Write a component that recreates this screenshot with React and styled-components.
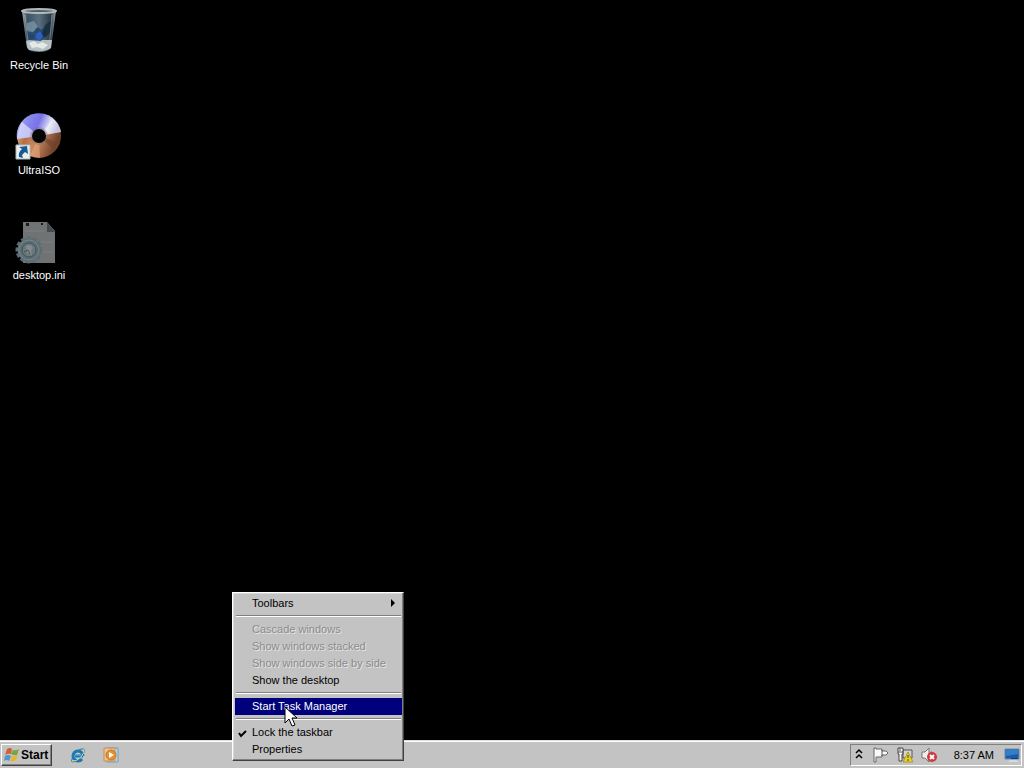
import React from "react";
import styled, { createGlobalStyle, css } from "styled-components";

const GlobalStyle = createGlobalStyle`
  * { box-sizing: border-box; }
  body {
    margin: 0;
    background: #000;
    font-family: "Liberation Sans", Arial, sans-serif;
    font-size: 11px;
    line-height: 17px;
    cursor: default;
  }
  button { font: inherit; color: inherit; }
`;

const raised = css`
  border: 1px solid;
  border-color: #fff #404040 #404040 #fff;
  box-shadow: inset -1px -1px 0 #808080;
`;

const Screen = styled.div`
  position: relative;
  display: flex;
  flex-direction: column;
  min-height: 100vh;
  overflow: hidden;
`;

const Desktop = styled.main`
  flex: 1;
  display: flex;
  flex-direction: column;
  align-items: flex-start;
  gap: 32px;
  padding: 7px 0 0 1px;
`;

const Shortcut = styled.button`
  display: flex;
  flex-direction: column;
  align-items: center;
  gap: 2px;
  width: 76px;
  height: 73px;
  padding: 0;
  border: 0;
  background: none;
  color: #fff;
  svg { display: block; width: 48px; height: 48px; }
`;

const Taskbar = styled.footer`
  display: flex;
  align-items: center;
  justify-content: space-between;
  height: 28px;
  padding: 1px 2px 0 1px;
  background: #c3c3c3;
  border-top: 1px solid #dedede;
  box-shadow: inset 0 1px 0 #fff;
`;

const TaskGroup = styled.div`
  display: flex;
  align-items: center;
`;

const StartButton = styled.button`
  ${raised}
  display: flex;
  align-items: center;
  gap: 1px;
  width: 51px;
  height: 22px;
  margin-right: 18px;
  padding: 0 2px;
  background: #c3c3c3;
  color: #000;
  font-weight: bold;
  font-size: 12px;
`;

const IconButton = styled.button`
  display: block;
  width: 16px;
  height: 16px;
  margin-right: ${(p) => p.$gap || 8}px;
  padding: 0;
  border: 0;
  background: none;
  svg { display: block; }
`;

const Tray = styled.div`
  display: flex;
  align-items: center;
  height: 22px;
  border: 1px solid;
  border-color: #808080 #fff #fff #808080;
`;

const Clock = styled.time`
  margin: 0 10px 0 9px;
  white-space: nowrap;
`;

const Menu = styled.div`
  ${raised}
  position: absolute;
  left: 232px;
  bottom: 7px;
  width: 172px;
  padding: 2px 1px 2px 2px;
  background: #c3c3c3;
  box-shadow: inset -1px -1px 0 #808080, inset 1px 1px 0 #d8d8d8;
`;

const Item = styled.button`
  display: grid;
  grid-template-columns: 17px 1fr 12px;
  align-items: center;
  width: 100%;
  height: 17px;
  padding: 0;
  border: 0;
  text-align: left;
  white-space: nowrap;
  background: ${(p) => (p.$active ? "#00007c" : "transparent")};
  color: ${(p) => (p.$active ? "#fff" : "#000")};
  &:disabled { color: #8b8b8b; text-shadow: 1px 1px 0 #e4e4e4; }
  svg { display: block; }
`;

const Separator = styled.hr`
  height: 2px;
  margin: 3px 1px 4px;
  border: 0;
  border-top: 1px solid #808080;
  border-bottom: 1px solid #fff;
`;

const Pointer = styled.svg`
  position: absolute;
  left: 284px;
  bottom: 40px;
  pointer-events: none;
`;

function BinIcon() {
  return (
    <svg viewBox="0 0 48 48" aria-hidden="true">
      <defs>
        <linearGradient id="glass" x1="0" x2="1">
          <stop offset="0" stopColor="#a3b2b9" />
          <stop offset=".15" stopColor="#3d5260" />
          <stop offset=".5" stopColor="#5a7080" />
          <stop offset=".84" stopColor="#2a3b46" />
          <stop offset="1" stopColor="#98a4aa" />
        </linearGradient>
      </defs>
      <path d="M7 4 12 41Q14 45 24 45Q34 45 36 41L41 4Z" fill="url(#glass)" />
      <path d="M11 34Q18 31 25 33L37 33L36 41Q30 46 14 43L12 40Z" fill="#b4bfc2" />
      <path d="m14 36 5-2 4 3 4-2 6 3-5 4-6-2-5 1Z" fill="#e4e8e6" />
      <path d="m12 16 7-2 4 6-3 2 1 6-7-1-2-5Z" fill="#7a97aa" opacity=".75" />
      <path d="m11 24 7 1 5-5 3 3 4-3 2 7-6 7-13-1Z" fill="#1d3f66" opacity=".8" />
      <path d="m21 27 4-3 3 5-3 5-5-3Z" fill="#2c5fc0" />
      <path d="m30 18 7-5-2 12-5 6-3-4Z" fill="#142a39" opacity=".8" />
      <path d="m10 8 4 34M37 8l-3 34" fill="none" stroke="#c3cccf" opacity=".45" />
      <ellipse cx="24" cy="4" rx="17" ry="2" fill="#53636c" stroke="#b0b8bb" strokeWidth="2" />
    </svg>
  );
}

function DiscIcon() {
  return (
    <svg viewBox="0 0 48 48" aria-hidden="true">
      <defs>
        <linearGradient id="blueDisc" x1="0" x2="1" y2=".25">
          <stop stopColor="#b8b9e7" /><stop offset=".3" stopColor="#8989ed" />
          <stop offset=".55" stopColor="#7773e7" /><stop offset=".8" stopColor="#e0e1f4" />
          <stop offset="1" stopColor="#9392c4" />
        </linearGradient>
        <linearGradient id="copper" x1="0" x2="1" y1="0" y2=".4">
          <stop stopColor="#f3d7bd" /><stop offset=".35" stopColor="#b66f45" />
          <stop offset=".6" stopColor="#cf8b60" /><stop offset="1" stopColor="#70412b" />
        </linearGradient>
      </defs>
      <circle cx="24" cy="24" r="22" fill="url(#copper)" />
      <path d="M2 27A22 22 0 1 1 46 20L24 24Z" fill="url(#blueDisc)" />
      <path d="M24 24 7 10Q3 16 2 27Z" fill="#fff" opacity=".55" />
      <path d="m24 24 14-17q6 4 8 13Z" fill="#fff" opacity=".45" />
      <path d="m24 24 21 7-5 8Z" fill="#70432d" opacity=".65" />
      <path d="m24 24-9 20 10 2Z" fill="#e7aa82" opacity=".55" />
      <circle cx="24" cy="24" r="9" fill="#806e70" opacity=".4" />
      <circle cx="24" cy="24" r="7" fill="#050505" />
      <path d="M1 33h14v14H1Z" fill="#e8eef1" stroke="#aebbc0" />
      <path d="m4 35 8-1 1 8-3-2-3 3 1 3-4-1q-1-5 3-8Z" fill="#195a91" />
    </svg>
  );
}

function ConfigIcon() {
  return (
    <svg viewBox="0 0 48 48" aria-hidden="true">
      <path d="M8 5h24l8 9v32H8Z" fill="#707273" />
      <path d="M32 5v10h8Z" fill="#464c4e" />
      <path d="M10 14h20M10 25h28M10 35h28" stroke="#7d8182" />
      <path d="M11 6h3v3h-3Zm15 0h2v2h-2Z" fill="#151b1c" />
      <circle cx="14" cy="33" r="9" fill="none" stroke="#5c6d73" strokeWidth="5" />
      <circle cx="14" cy="33" r="12" fill="none" stroke="#5c6d73" strokeWidth="3" strokeDasharray="4 2" />
      <circle cx="14" cy="33" r="10" fill="none" stroke="#75868c" />
      <circle cx="14" cy="33" r="7" fill="#69767a" stroke="#43545a" />
      <path d="M11 29q5-3 7 2l-2 3 1 4-5-2Z" fill="#7f8c90" />
      <path d="m9 35 4-2 2 4" fill="none" stroke="#435359" />
    </svg>
  );
}

function WindowsIcon() {
  return (
    <svg width="16" height="16" viewBox="0 0 16 16" aria-hidden="true">
      <path d="M3 2q3-2 5 0L7 7Q4 6 1 8Z" fill="#ce6138" />
      <path d="M9 3q3 1 6-1l-2 6q-3 1-6-1Z" fill="#79a63c" />
      <path d="M1 9q3-2 6 0l-2 5q-3-2-5 0Z" fill="#5195ca" />
      <path d="M8 9q3 1 6-1l-2 5q-3 2-6 1Z" fill="#e6b52f" />
    </svg>
  );
}

function ExplorerIcon() {
  return (
    <svg width="16" height="16" viewBox="0 0 16 16" aria-hidden="true">
      <path d="M13 9H5M13 9A5 5 0 1 0 12 12" fill="none" stroke="#1878b8" strokeWidth="3" />
      <path d="M5 8h6" stroke="#66b8e0" />
      <path d="M3 10Q0 15 3 15 7 15 12 9 16 3 14 2 12 1 7 4" fill="none" stroke="#277fae" />
      <path d="M2 14Q6 15 11 10 15 5 14 2" fill="none" stroke="#e2d488" />
    </svg>
  );
}

function MediaIcon() {
  return (
    <svg width="16" height="16" viewBox="0 0 16 16" aria-hidden="true">
      <path d="M4 1h11v14H4Z" fill="#b9d5e8" stroke="#739dbd" />
      <path d="M1 1h11v13H1Z" fill="#e9c59c" stroke="#cf8b52" />
      <circle cx="8" cy="8" r="5" fill="#e3922e" stroke="#c7792a" />
      <path d="m6 5 5 3-5 3Z" fill="#fff" />
    </svg>
  );
}

function FlagIcon() {
  return (
    <svg width="16" height="16" viewBox="0 0 16 16" aria-hidden="true">
      <path d="M1 1v14h2V10h6V8h4l2-2-2-2H9V2H3V1Z" fill="#f9f9f9" stroke="#666" />
      <path d="M9 3v6" stroke="#555" />
    </svg>
  );
}

function NetworkIcon() {
  return (
    <svg width="16" height="16" viewBox="0 0 16 16" aria-hidden="true">
      <path d="M6 3h9v8H6Z" fill="#d4d4d2" stroke="#555" />
      <path d="M1 1h5v6H5v7H2V7H1Z" fill="#f7f7f7" stroke="#444" />
      <path d="M3 1v3M1 5h5" stroke="#555" />
      <path d="M11 5 6 15h10Z" fill="#ecd02e" stroke="#a89a28" />
      <path d="M11 8v3M11 12v2" stroke="#4b461a" />
    </svg>
  );
}

function VolumeIcon() {
  return (
    <svg width="16" height="16" viewBox="0 0 16 16" aria-hidden="true">
      <path d="M1 5h3l4-4v14l-4-4H1Z" fill="#eee" stroke="#777" />
      <path d="M10 4q2 3 0 7" fill="none" stroke="#888" />
      <circle cx="11" cy="10" r="5" fill="#cf383d" />
      <path d="m9 8 4 4m0-4-4 4" stroke="#fff" strokeWidth="2" />
    </svg>
  );
}

function MonitorIcon() {
  return (
    <svg width="16" height="16" viewBox="0 0 16 16" aria-hidden="true">
      <path d="M1 2h14v10H1Z" fill="#2059a8" stroke="#668fb2" />
      <path d="M2 3h12v4L2 9Z" fill="#3080c8" />
      <path d="M7 11h7v1H7Z" fill="#173e72" />
      <path d="M6 13h6l3 2H4Z" fill="#d5dadb" />
    </svg>
  );
}

const shortcuts = [
  ["Recycle Bin", BinIcon],
  ["UltraISO", DiscIcon],
  ["desktop.ini", ConfigIcon],
];

const menuItems = [
  { label: "Toolbars", submenu: true },
  null,
  { label: "Cascade windows", disabled: true },
  { label: "Show windows stacked", disabled: true },
  { label: "Show windows side by side", disabled: true },
  { label: "Show the desktop" },
  null,
  { label: "Start Task Manager", active: true },
  null,
  { label: "Lock the taskbar", checked: true },
  { label: "Properties" },
];

function ContextMenu() {
  return (
    <Menu role="menu" aria-label="Taskbar">
      {menuItems.map((item, index) =>
        item ? (
          <Item
            key={item.label}
            role={item.checked ? "menuitemcheckbox" : "menuitem"}
            aria-checked={item.checked}
            aria-haspopup={item.submenu}
            disabled={item.disabled}
            $active={item.active}
          >
            <span>
              {item.checked && (
                <svg width="12" height="12" viewBox="0 0 12 12" aria-hidden="true">
                  <path d="m4 6 2 3 5-5" fill="none" stroke="#000" strokeWidth="2" />
                </svg>
              )}
            </span>
            <span>{item.label}</span>
            {item.submenu && (
              <svg width="6" height="9" viewBox="0 0 6 9" aria-hidden="true">
                <path d="M1 0v8l4-4Z" />
              </svg>
            )}
          </Item>
        ) : (
          <Separator key={index} />
        )
      )}
    </Menu>
  );
}

export default function App() {
  return (
    <Screen>
      <GlobalStyle />
      <Desktop>
        {shortcuts.map(([label, Icon]) => (
          <Shortcut key={label}>
            <Icon />
            <span>{label}</span>
          </Shortcut>
        ))}
      </Desktop>
      <Taskbar>
        <TaskGroup>
          <StartButton><WindowsIcon />Start</StartButton>
          <IconButton $gap={17} aria-label="Internet Explorer"><ExplorerIcon /></IconButton>
          <IconButton aria-label="Windows Media Player"><MediaIcon /></IconButton>
        </TaskGroup>
        <Tray>
          <IconButton $gap={6} aria-label="Show hidden icons">
            <svg width="16" height="16" viewBox="0 0 16 16" aria-hidden="true">
              <path d="m5 6 3-3 3 3M5 11l3-3 3 3" fill="none" stroke="#000" strokeWidth="1.5" />
            </svg>
          </IconButton>
          <IconButton aria-label="Action Center"><FlagIcon /></IconButton>
          <IconButton aria-label="Network"><NetworkIcon /></IconButton>
          <IconButton aria-label="Volume"><VolumeIcon /></IconButton>
          <Clock dateTime="08:37">8:37 AM</Clock>
          <IconButton $gap={1} aria-label="Show desktop"><MonitorIcon /></IconButton>
        </Tray>
      </Taskbar>
      <ContextMenu />
      <Pointer width="14" height="22" viewBox="0 0 14 22" aria-hidden="true">
        <path d="M1 1v16l4-4 3 7 3-1-3-7h5Z" fill="#fff" stroke="#000" />
      </Pointer>
    </Screen>
  );
}
